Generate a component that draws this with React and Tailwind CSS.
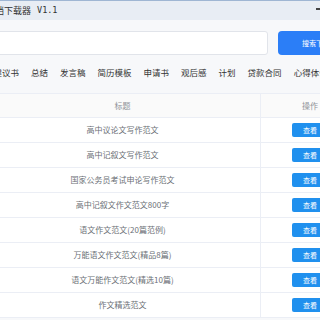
import React from 'react';

const TABS = ['建议书', '总结', '发言稿', '简历模板', '申请书', '观后感', '计划', '贷款合同', '心得体会'];

const ROWS = [
  '高中议论文写作范文',
  '高中记叙文写作范文',
  '国家公务员考试申论写作范文',
  '高中记叙文作文范文800字',
  '语文作文范文(20篇范例)',
  '万能语文作文范文(精品8篇)',
  '语文万能作文范文(精选10篇)',
  '作文精选范文',
];

const FONT = { fontFamily: '"Noto Sans CJK SC", "Noto Sans", sans-serif' };

const App = () => {
  return (
    <div className="w-[320px] h-[320px] overflow-hidden relative bg-[#f7f8fa]" style={FONT}>
      <div className="ml-[-15px] w-[400px] flex flex-col">
        {/* title bar */}
        <div className="h-[20px] bg-[#e8edf4] border-t border-[#9fb6d3] flex items-center pl-[1px] text-[9px] text-[#333] relative">
          <span>文档下载器</span>
          <span className="ml-[6px] text-[8.5px]" style={{ fontFamily: '"DejaVu Sans Mono", monospace' }}>V1.1</span>
          <span className="absolute left-[331px] top-[7px] w-[4px] h-[2px] bg-[#444]"></span>
        </div>

        {/* search */}
        <div className="flex items-center mt-[11px]">
          <div className="w-[283px] h-[24px] shrink-0 bg-white border border-[#e1e4ea] rounded-[3px]"></div>
          <div className="ml-[10px] w-[90px] h-[24px] shrink-0 bg-[#2b7ef7] rounded-[4px] text-white text-[7px] flex items-center pl-[24px] whitespace-nowrap">搜索下载</div>
        </div>

        {/* tabs */}
        <div className="flex items-center gap-[12px] pl-[8.5px] mt-[9px] h-[16px] text-[8.5px] text-[#333]">
          {TABS.map(t => (
            <span key={t} className="whitespace-nowrap">{t}</span>
          ))}
        </div>

        {/* table */}
        <div className="mt-[13px] bg-white border-t border-[#ebeef5]">
          <div className="flex h-[24px] bg-[#fafafa] border-b border-[#ebeef5] text-[8px] text-[#909399]">
            <div className="w-[276px] flex items-center justify-center border-r border-[#ebeef5]">标题</div>
            <div className="w-[98px] flex items-center justify-center">操作</div>
          </div>
          {ROWS.map(r => (
            <div key={r} className="flex h-[25px] border-b border-[#ebeef5] text-[8px] text-[#6b6f76]">
              <div className="w-[276px] flex items-center justify-center border-r border-[#ebeef5]">{r}</div>
              <div className="w-[98px] flex items-center justify-center">
                <div className="w-[36px] h-[14px] bg-[#2090ee] rounded-[2px] text-white text-[7px] flex items-center justify-center">查看</div>
              </div>
            </div>
          ))}
        </div>
      </div>
    </div>
  );
};

export default App;
